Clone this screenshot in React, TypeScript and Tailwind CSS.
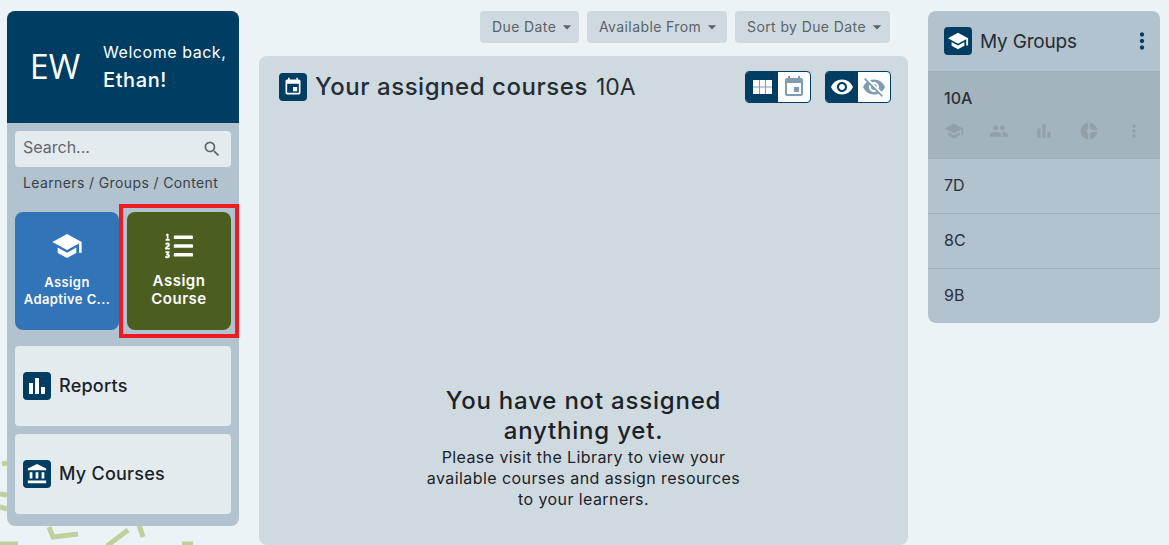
import {
  MdAccountBalance,
  MdArrowDropDown,
  MdBarChart,
  MdDonutSmall,
  MdEvent,
  MdMoreVert,
  MdPeople,
  MdSchool,
  MdSearch,
  MdVisibility,
  MdVisibilityOff,
} from 'react-icons/md';
import { FaListOl } from 'react-icons/fa';
import type { ReactNode } from 'react';

const font = "font-['Inter','Noto_Sans',sans-serif]";

// Small square navy icon used in headers and cards
function IconBox({ children }: { children: ReactNode }) {
  return (
    <span className="flex h-7 w-7 shrink-0 items-center justify-center rounded bg-[#003d63] text-[20px] text-white">
      {children}
    </span>
  );
}

function FilterButton({ label, width }: { label: string; width: string }) {
  return (
    <button className={`flex h-8 items-center rounded bg-[#cfdae0] pl-3 text-[14px] tracking-[0.4px] text-[#5b6369] ${width}`}>
      <span className="pb-[2px]">{label}</span>
      <MdArrowDropDown className="ml-[1px] text-[20px] text-[#5b6369]" />
    </button>
  );
}

function NavCard({ icon, label }: { icon: ReactNode; label: string }) {
  return (
    <div className="flex h-20 items-center gap-2 rounded bg-[#e4ebef] px-2 text-[18px] font-medium tracking-[0.25px] text-[#1b2228]">
      <IconBox>{icon}</IconBox>
      <span className="pb-[2px]">{label}</span>
    </div>
  );
}

// Filled table icon of the grid/calendar toggle
function GridIcon() {
  return (
    <svg width="19" height="14" viewBox="0 0 19 14" fill="none">
      <rect width="19" height="14" fill="#ffffff" />
      <path d="M6.5 0V14M12.5 0V14M0 7H19" stroke="#7f9db2" strokeWidth="1" />
    </svg>
  );
}

function Sidebar() {
  return (
    <aside className="flex h-[515px] w-[232px] shrink-0 flex-col overflow-hidden rounded-lg bg-[#b2c3cf]">
      <div className="flex h-[112px] items-center bg-[#003d63] text-white">
        <span className="w-[96px] pb-[2px] text-center font-['Open_Sans',sans-serif] text-[34px] leading-none">EW</span>
        <div className="whitespace-nowrap">
          <div className="text-[16px] leading-[26px] tracking-[0.55px]">Welcome back,</div>
          <div className="text-[20px] font-medium leading-[30px] tracking-[0.6px]">Ethan!</div>
        </div>
      </div>
      <div className="flex flex-col px-2 pt-2">
        <div className="flex h-9 items-center justify-between rounded bg-[#e4ebef] pl-2 pr-[9px] text-[16px] text-[#5f666b]">
          <span className="pb-[4px]">Search...</span>
          <MdSearch className="text-[20px]" />
        </div>
        <div className="mt-2 h-[20px] pl-2 text-[14px] leading-[16px] tracking-[0.38px] text-[#3a4149]">Learners / Groups / Content</div>
        <div className="mt-[17px] flex gap-2">
          <div className="flex h-[118px] w-[104px] flex-col items-center rounded-lg bg-[#3174b7] pt-[18px] text-center text-[13px] font-semibold leading-[17px] tracking-[0.4px] text-white">
            <MdSchool className="mb-[12px] text-[32px]" />
            Assign
            <br />
            Adaptive C...
          </div>
          <div className="relative flex h-[118px] w-[104px] flex-col items-center rounded-lg bg-[#4b5e1f] pt-[20px] text-center text-[15px] font-semibold leading-[18px] tracking-[0.5px] text-white">
            <FaListOl className="mb-[12px] text-[28px]" />
            Assign
            <br />
            Course
            <div className="absolute -bottom-2 -left-2 -right-2 -top-2 border-4 border-[#ed1c24]" />
          </div>
        </div>
        <div className="mt-4 flex flex-col gap-2">
          <NavCard icon={<MdBarChart className="text-[24px]" />} label="Reports" />
          <NavCard icon={<MdAccountBalance className="text-[22px]" />} label="My Courses" />
        </div>
      </div>
    </aside>
  );
}

function MainPanel() {
  return (
    <main className="flex w-[649px] shrink-0 flex-col">
      <div className="flex h-8 justify-end gap-2 pr-[18px]">
        <FilterButton label="Due Date" width="w-[99px]" />
        <FilterButton label="Available From" width="w-[140px]" />
        <FilterButton label="Sort by Due Date" width="w-[155px]" />
      </div>
      <section className="mt-[13px] h-[600px] rounded-lg bg-[#cfdae0] px-5 pt-[15px]">
        <div className="flex h-8 items-center justify-between">
          <div className="flex items-center gap-2 text-[#262c33]">
            <IconBox>
              <MdEvent />
            </IconBox>
            <span className="text-[24px] font-medium leading-8 tracking-[0.55px]">Your assigned courses</span>
            <span className="text-[23px] leading-8">10A</span>
          </div>
          <div className="mr-[-3px] flex gap-[14px]">
            <div className="flex h-8 overflow-hidden rounded border border-[#003d63] bg-white text-[24px]">
              <span className="flex w-8 items-center justify-center bg-[#003d63] text-white">
                <GridIcon />
              </span>
              <span className="flex w-8 items-center justify-center text-[#7f9db2]">
                <MdEvent />
              </span>
            </div>
            <div className="flex h-8 overflow-hidden rounded border border-[#003d63] bg-white text-[24px]">
              <span className="flex w-8 items-center justify-center bg-[#003d63] text-white">
                <MdVisibility />
              </span>
              <span className="flex w-8 items-center justify-center text-[#7f9db2]">
                <MdVisibilityOff />
              </span>
            </div>
          </div>
        </div>
        <div className="mx-auto mt-[283px] w-[325px] text-center text-[#1b2228]">
          <h2 className="text-[24px] font-medium leading-[30px] tracking-[0.8px]">You have not assigned anything yet.</h2>
          <p className="mt-[1px] text-[16px] leading-[21px] tracking-[0.42px]">
            Please visit the Library to view your available courses and assign resources to your learners.
          </p>
        </div>
      </section>
    </main>
  );
}

function GroupRow({ label }: { label: string }) {
  return (
    <div className="flex h-[55px] items-center border-t border-[#9fb0bb] pb-[2px] pl-4 text-[16px] text-[#2a3138]">{label}</div>
  );
}

function GroupsPanel() {
  return (
    <aside className="flex w-[232px] shrink-0 flex-col self-start overflow-hidden rounded-lg bg-[#b2c3cf]">
      <div className="flex h-[60px] items-center justify-between pl-4 pr-[5px]">
        <div className="flex items-center gap-2 text-[19px] tracking-[-0.2px] text-[#262c33]">
          <IconBox>
            <MdSchool className="text-[22px]" />
          </IconBox>
          <span className="pt-[2px]">My Groups</span>
        </div>
        <MdMoreVert className="text-[26px] text-[#003d63]" />
      </div>
      <div className="h-[87px] border-t border-[#9fb0bb] bg-[#a3b4be] pl-4 pt-[16px]">
        <div className="text-[16px] font-medium leading-5 text-[#2a3138]">10A</div>
        <div className="mt-[13px] flex gap-[25px] text-[20px] text-[#94a0a8]">
          <MdSchool />
          <MdPeople />
          <MdBarChart />
          <MdDonutSmall />
          <MdMoreVert />
        </div>
      </div>
      <GroupRow label="7D" />
      <GroupRow label="8C" />
      <GroupRow label="9B" />
    </aside>
  );
}

export default function App() {
  return (
    <div className={`relative flex h-[545px] w-[1169px] gap-5 overflow-hidden bg-[#ecf3f6] pl-[7px] pt-[11px] ${font}`}>
      {/* background doodles peeking out under the sidebar */}
      <svg className="absolute bottom-0 left-0 h-[105px] w-[260px]" viewBox="0 0 260 105" fill="none" stroke="#c0d09c" strokeWidth="5">
        <path d="M2 24 L7 23 M0 54 L7 55 M0 67 L7 69 M49 87 L53 97 L78 94 M107 106 L128 90 M139 85 L143 97 M0 104 L18 104 M182 104 L193 104" />
      </svg>
      <div className="relative flex gap-5">
        <Sidebar />
        <MainPanel />
        <GroupsPanel />
      </div>
    </div>
  );
}
